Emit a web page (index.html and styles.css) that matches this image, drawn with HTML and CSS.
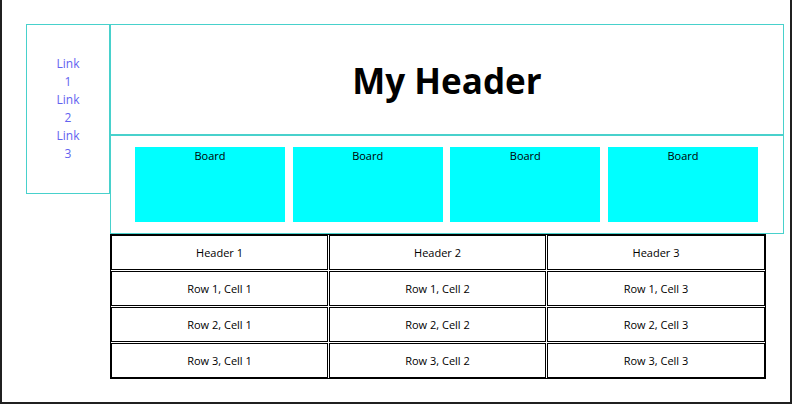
FILE: index.html
```html
<!DOCTYPE html>
<html lang="en">
<head>
<meta charset="utf-8">
<title>Layout</title>
<link rel="stylesheet" href="styles.css">
</head>
<body>
<div class="frame">
  <nav class="sidebar">
    <a class="nav-link" href="#">Link 1</a>
    <a class="nav-link" href="#">Link 2</a>
    <a class="nav-link" href="#">Link 3</a>
  </nav>
  <main class="main">
    <header class="page-header"><h1>My Header</h1></header>
    <section class="boards">
      <div class="board">Board</div>
      <div class="board">Board</div>
      <div class="board">Board</div>
      <div class="board">Board</div>
    </section>
    <div class="grid-table">
      <div class="cell">Header 1</div>
      <div class="cell">Header 2</div>
      <div class="cell">Header 3</div>
      <div class="cell">Row 1, Cell 1</div>
      <div class="cell">Row 1, Cell 2</div>
      <div class="cell">Row 1, Cell 3</div>
      <div class="cell">Row 2, Cell 1</div>
      <div class="cell">Row 2, Cell 2</div>
      <div class="cell">Row 2, Cell 3</div>
      <div class="cell">Row 3, Cell 1</div>
      <div class="cell">Row 3, Cell 2</div>
      <div class="cell">Row 3, Cell 3</div>
    </div>
  </main>
</div>
</body>
</html>
```

FILE: styles.css
```css
* { box-sizing: border-box; }
html, body { margin: 0; padding: 0; background: #fff; }
body { font-family: "Open Sans", "Liberation Sans", Arial, sans-serif; color: #000; }

.frame {
  width: 792px;
  height: 404px;
  border-left: 2px solid #202020;
  border-right: 2px solid #202020;
  border-bottom: 2px solid #202020;
  padding: 24px 0 0 24px;
  display: flex;
  align-items: flex-start;
}

.sidebar {
  width: 84px;
  height: 170px;
  border: 1px solid #48d1cc;
  display: flex;
  flex-direction: column;
  align-items: center;
  justify-content: center;
}
.nav-link {
  display: block;
  width: 28px;
  text-align: center;
  color: #6262f0;
  text-decoration: none;
  font-size: 12px;
  line-height: 18px;
}

.main {
  width: 674px;
  display: flex;
  flex-direction: column;
}

.page-header {
  height: 111px;
  border: 1px solid #48d1cc;
  display: flex;
  align-items: center;
  justify-content: center;
}
.page-header h1 {
  margin: 0;
  font-size: 35px;
  font-weight: bold;
  line-height: 1;
  padding-top: 1px;
}

.boards {
  height: 99px;
  border: 1px solid #48d1cc;
  padding: 11px 25px 11px 24px;
  display: flex;
  justify-content: space-between;
}
.board {
  width: 150px;
  height: 75px;
  background: #00ffff;
  text-align: center;
  font-size: 11px;
  line-height: 17px;
}

.grid-table {
  width: 656px;
  border: 1px solid #000;
  display: grid;
  grid-template-columns: 217px 217px 218px;
  grid-auto-rows: 35px;
  gap: 1px;
}
.cell {
  border: 1px solid #000;
  display: flex;
  align-items: center;
  justify-content: center;
  font-size: 11px;
}
```
